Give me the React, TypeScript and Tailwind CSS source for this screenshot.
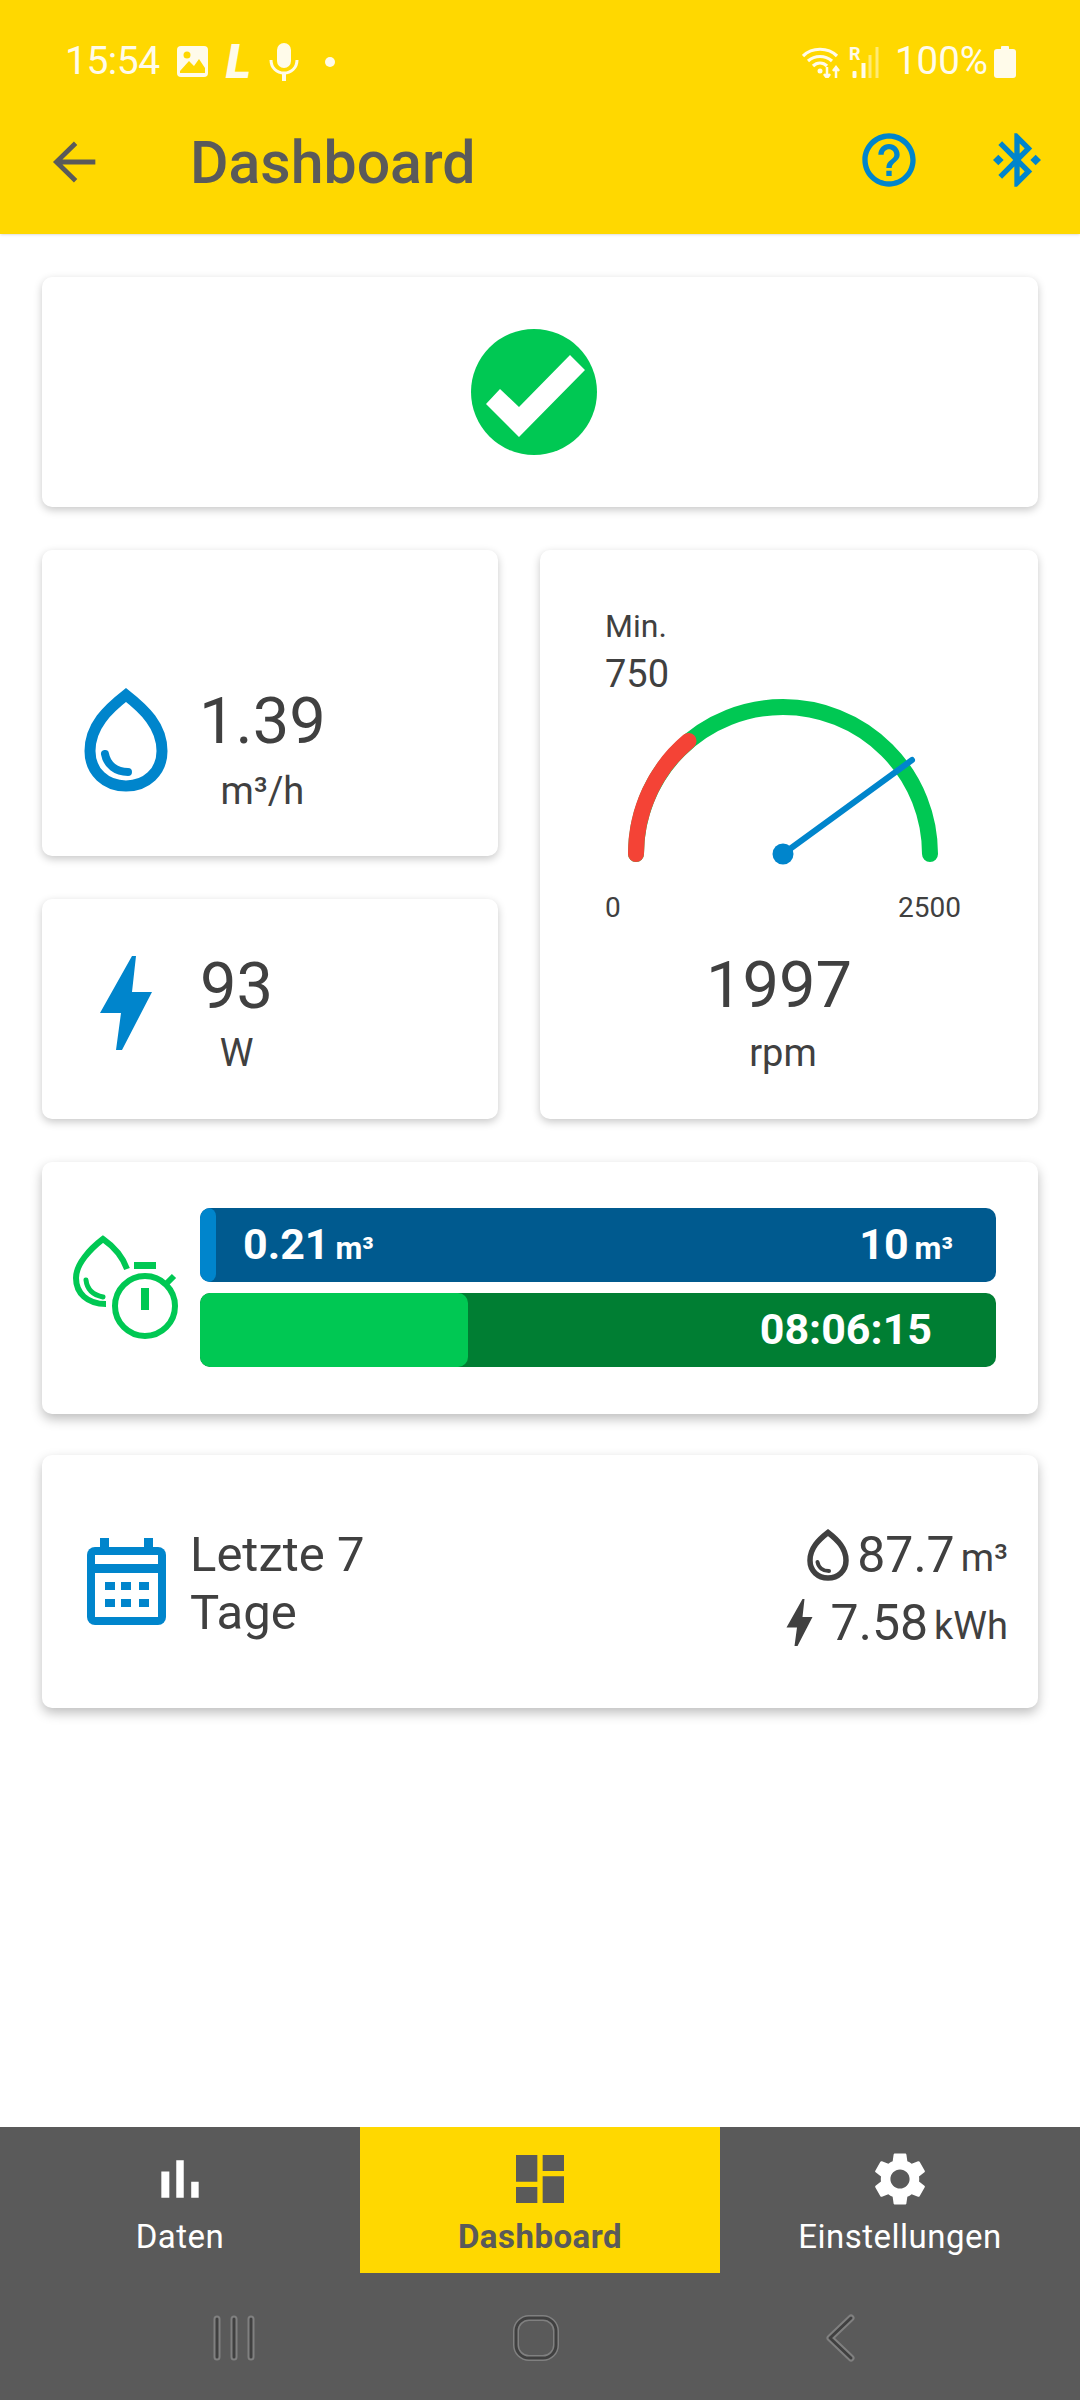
import React from 'react'

const BOLT = '32,0 36,0 32,36 52,36 22,94 16,94 21,57 0,57'

function DropIcon({ className }: { className: string }) {
  return (
    <svg viewBox="0 0 84 104" className={className} fill="none" stroke="currentColor">
      <path d="M42 7C24 21 6 38 6 63C6 84 22 98 42 98C62 98 78 84 78 63C78 38 60 21 42 7Z" strokeWidth="11" />
      <path d="M21 66C23 77 32 84 44 84" strokeWidth="8" strokeLinecap="round" />
    </svg>
  )
}

function BoltIcon({ className }: { className: string }) {
  return (
    <svg viewBox="0 0 52 94" className={className} fill="currentColor">
      <polygon points={BOLT} />
    </svg>
  )
}

function MaterialIcon({ d, className }: { d: string; className: string }) {
  return (
    <svg viewBox="0 0 24 24" className={className} fill="currentColor">
      <path d={d} />
    </svg>
  )
}

function StatusBar() {
  return (
    <div className="flex h-[120px] items-center pl-[65px] pr-[64px] pt-[3px] text-[#fffbea]">
      <span className="text-[39px] leading-none tracking-[-0.5px]">15:54</span>
      <svg viewBox="0 0 31 31" className="ml-[17px] h-[31px] w-[31px]">
        <rect width="31" height="31" rx="4" fill="currentColor" />
        <circle cx="10" cy="9" r="3.5" fill="#ffd800" />
        <path d="M3 25L12 15L17 20L22 13L28 22V27H3Z" fill="#ffd800" />
      </svg>
      <span className="ml-[18px] text-[48px] font-black italic leading-none">L</span>
      <svg viewBox="0 0 30 38" className="ml-[18px] h-[38px] w-[30px]" fill="none" stroke="currentColor">
        <rect x="8" y="0" width="14" height="25" rx="7" fill="currentColor" stroke="none" />
        <path d="M2 17C2 25 8 30 15 30C22 30 28 25 28 17" strokeWidth="3" />
        <path d="M15 30V38" strokeWidth="4" />
      </svg>
      <span className="ml-[26px] h-[10px] w-[10px] rounded-full bg-[#fffbea]" />

      <svg viewBox="0 0 40 32" className="ml-auto h-[32px] w-[40px]" fill="none" stroke="currentColor" strokeWidth="3.2">
        <path d="M1 10C10 1 26 1 35 10" />
        <path d="M6 15C13 9 23 9 30 15" />
        <path d="M11 20C15 16 21 16 25 20" />
        <circle cx="18" cy="25" r="2.5" fill="currentColor" stroke="none" />
        <path d="M25 21V32M22 28L25 32L28 28" strokeWidth="2.5" />
        <path d="M34 32V21M31 25L34 21L37 25" strokeWidth="2.5" />
      </svg>
      <div className="ml-[7px] flex h-[32px] w-[31px] flex-col">
        <span className="text-[18px] font-bold leading-[16px]">R</span>
      </div>
      <svg viewBox="0 0 30 32" className="ml-[-31px] h-[32px] w-[31px]" fill="currentColor">
        <rect x="3" y="25" width="4" height="7" rx="1" />
        <rect x="12" y="17" width="4" height="15" />
        <rect x="19" y="9" width="3" height="23" opacity=".5" />
        <rect x="26" y="1" width="3" height="31" opacity=".5" />
      </svg>
      <span className="ml-[15px] text-[38.5px] leading-none">100%</span>
      <svg viewBox="0 0 22 32" className="ml-[6px] h-[32px] w-[22px]" fill="currentColor">
        <rect x="7" y="0" width="8" height="5" rx="1" />
        <rect x="0" y="3" width="22" height="29" rx="3" />
      </svg>
    </div>
  )
}

function Header() {
  return (
    <header className="relative z-10 h-[234px] bg-[#ffd800] shadow-sm">
      <StatusBar />
      <div className="flex h-[80px] items-center">
        <svg viewBox="0 0 24 24" className="ml-[42px] mt-[3px] h-[64px] w-[64px] text-[#5a5a5a]" fill="none" stroke="currentColor" strokeWidth="1.8">
          <path d="M20 12H5.6M12.6 5L5.4 12L12.6 19" />
        </svg>
        <h1 className="ml-[84px] mt-[5px] text-[59px] font-medium leading-none text-[#5a5a5a]">Dashboard</h1>
        <MaterialIcon
          d="M11 18h2v-2h-2v2zm1-16C6.48 2 2 6.48 2 12s4.48 10 10 10 10-4.48 10-10S17.52 2 12 2zm0 18c-4.41 0-8-3.59-8-8s3.59-8 8-8 8 3.59 8 8-3.59 8-8 8zm0-14c-2.21 0-4 1.79-4 4h2c0-1.1.9-2 2-2s2 .9 2 2c0 2-3 1.75-3 5h2c0-2.25 3-2.5 3-5 0-2.21-1.79-4-4-4z"
          className="ml-auto h-[64px] w-[64px] text-[#0085cc]"
        />
        <MaterialIcon
          d="M7 12l-2-2-2 2 2 2 2-2zm10.71-4.29L12 2h-1v7.59L6.41 5 5 6.41 10.59 12 5 17.59 6.41 19 11 14.41V22h1l5.71-5.71-4.3-4.29 4.3-4.29zM13 5.83l1.88 1.88L13 9.59V5.83zm1.88 10.46L13 18.17v-3.76l1.88 1.88zM19 10l-2 2 2 2 2-2-2-2z"
          className="ml-[64px] mr-[31px] h-[64px] w-[64px] text-[#0085cc]"
        />
      </div>
    </header>
  )
}

function Card({ className, deep, children }: { className: string; deep?: boolean; children: React.ReactNode }) {
  const shadow = deep ? 'shadow-[0_5px_12px_rgba(0,0,0,0.26)]' : 'shadow-[0_3px_8px_rgba(0,0,0,0.22)]'
  return <div className={`rounded-[10px] bg-white ${shadow} ${className}`}>{children}</div>
}

function Gauge() {
  return (
    <svg viewBox="0 0 498 170" className="h-[170px] w-[498px]" fill="none">
      <path d="M96 156A147 147 0 0 1 390 156" stroke="#00c853" strokeWidth="16" strokeLinecap="round" />
      <path d="M96 156A147 147 0 0 1 148.5 43" stroke="#f44336" strokeWidth="16" strokeLinecap="round" />
      <path d="M243 156L372 62" stroke="#0085cc" strokeWidth="6" strokeLinecap="round" />
      <circle cx="243" cy="156" r="10.5" fill="#0085cc" />
    </svg>
  )
}

function TimerDropIcon() {
  return (
    <svg viewBox="0 0 106 105" className="h-[105px] w-[106px] text-[#00c853]" fill="none" stroke="currentColor">
      <path d="M54 34C49 20 40 11 30 4C17 14 3 29 3 43C3 58 14 69 33 69" strokeWidth="6" />
      <path d="M13 45C14 54 20 60 30 62" strokeWidth="5" strokeLinecap="round" />
      <circle cx="72" cy="71" r="30" strokeWidth="6" />
      <path d="M72 53V75" strokeWidth="8" />
      <path d="M61 30.5H83" strokeWidth="7" />
      <path d="M92 50L101 41" strokeWidth="6" />
    </svg>
  )
}

function CalendarIcon() {
  return (
    <svg viewBox="0 0 79 87" className="h-[87px] w-[79px] shrink-0 text-[#0085cc]" fill="currentColor">
      <rect x="13" y="0" width="9" height="14" />
      <rect x="57" y="0" width="9" height="14" />
      <rect x="0" y="9" width="79" height="78" rx="8" />
      <rect x="8" y="17" width="63" height="9" fill="#fff" />
      <rect x="8" y="35" width="63" height="44" fill="#fff" />
      <rect x="18" y="44" width="10" height="8" />
      <rect x="34" y="44" width="10" height="8" />
      <rect x="52" y="44" width="10" height="8" />
      <rect x="18" y="61" width="10" height="8" />
      <rect x="34" y="61" width="10" height="8" />
      <rect x="52" y="61" width="10" height="8" />
    </svg>
  )
}

function Cards() {
  return (
    <main className="flex flex-1 flex-col gap-[43px] px-[42px] pt-[43px] text-[#404040]">
      <Card className="flex h-[230px] items-center justify-center pr-[12px]">
        <svg viewBox="0 0 126 126" className="h-[126px] w-[126px]">
          <circle cx="63" cy="63" r="63" fill="#00c853" />
          <polygon points="15,75 29,60 48,78 99,26 114,41 48,108" fill="#fff" />
        </svg>
      </Card>

      <div className="grid grid-cols-[456px_498px] grid-rows-[306px_220px] gap-x-[42px] gap-y-[43px]">
        <Card className="flex items-end pb-[43px] pl-[42px]">
          <DropIcon className="mb-[21px] h-[104px] w-[84px] text-[#0085cc]" />
          <div className="ml-[31px] flex flex-col items-center">
            <span className="text-[65px] leading-[72px]">1.39</span>
            <span className="mt-[12px] text-[38px] leading-[44px]">m³/h</span>
          </div>
        </Card>
        <Card className="row-start-2 flex items-center pl-[58px]">
          <BoltIcon className="mb-[12px] h-[94px] w-[52px] text-[#0085cc]" />
          <div className="ml-[48px] mt-[5px] flex flex-col items-center">
            <span className="text-[65px] leading-[72px]">93</span>
            <span className="mt-[11px] text-[38px] leading-[40px]">W</span>
          </div>
        </Card>
        <Card className="col-start-2 row-span-2 row-start-1 flex flex-col">
          <span className="ml-[65px] mt-[56px] text-[32px] leading-[40px]">Min.</span>
          <span className="ml-[65px] mt-[4px] text-[38px] leading-[48px]">750</span>
          <Gauge />
          <div className="mt-[22px] flex justify-between pl-[65px] pr-[77px] text-[28px] leading-[36px]">
            <span>0</span>
            <span>2500</span>
          </div>
          <div className="mt-[23px] flex flex-col items-center pr-[12px]">
            <span className="pr-[8px] text-[65px] leading-[72px]">1997</span>
            <span className="mt-[12px] text-[38px] leading-[40px]">rpm</span>
          </div>
        </Card>
      </div>

      <Card deep className="flex h-[252px] items-center pb-[2px] pl-[31px] pr-[42px]">
        <TimerDropIcon />
        <div className="ml-[21px] flex flex-1 flex-col gap-[11px] font-bold text-white">
          <div className="relative flex h-[74px] items-center justify-between overflow-hidden rounded-[10px] bg-[#005a8f] pl-[43px] pr-[43px]">
            <div className="absolute inset-y-0 left-0 w-[16px] rounded-[10px] bg-[#0085cc]" />
            <span className="relative text-[43px] leading-none">
              0.21<span className="ml-[6px] text-[31px]">m³</span>
            </span>
            <span className="relative text-[43px] leading-none">
              10<span className="ml-[6px] text-[31px]">m³</span>
            </span>
          </div>
          <div className="relative flex h-[74px] items-center justify-end overflow-hidden rounded-[10px] bg-[#007e33] pr-[64px]">
            <div className="absolute inset-y-0 left-0 w-[268px] rounded-[10px] bg-[#00c853]" />
            <span className="relative text-[43px] leading-none">08:06:15</span>
          </div>
        </div>
      </Card>

      <Card deep className="-mt-[2px] flex h-[253px] items-center pl-[45px] pr-[30px]">
        <CalendarIcon />
        <div className="ml-[24px] mt-[4px] text-[49px] leading-[58px]">
          <div>Letzte 7</div>
          <div>Tage</div>
        </div>
        <div className="ml-auto mt-[14px] flex flex-col items-end gap-[8px]">
          <div className="flex h-[60px] items-center">
            <DropIcon className="h-[52px] w-[42px]" />
            <span className="ml-[8px] text-[50px] leading-none">87.7</span>
            <span className="ml-[6px] mt-[6px] text-[38px] leading-none">m³</span>
          </div>
          <div className="flex h-[60px] items-center">
            <BoltIcon className="h-[47px] w-[27px]" />
            <span className="ml-[18px] text-[50px] leading-none">7.58</span>
            <span className="ml-[6px] mt-[6px] text-[38px] leading-none">kWh</span>
          </div>
        </div>
      </Card>
    </main>
  )
}

function NavTab({ icon, label, active }: { icon: string; label: string; active?: boolean }) {
  return (
    <div className={`flex flex-col items-center pt-[20px] ${active ? 'bg-[#ffd800] text-[#5a5a5a]' : 'text-white'}`}>
      <MaterialIcon d={icon} className="h-[64px] w-[64px]" />
      <span className={`mt-[6px] text-[33px] leading-[40px] tracking-[0.5px] ${active ? 'font-bold' : ''}`}>{label}</span>
    </div>
  )
}

function BottomNav() {
  return (
    <footer className="bg-[#5a5a5a]">
      <div className="grid h-[146px] grid-cols-3">
        <NavTab label="Daten" icon="M5 9.2h3V19H5zM10.6 5h2.8v14h-2.8zm5.6 8H19v6h-2.8z" />
        <NavTab label="Dashboard" active icon="M3 13h8V3H3v10zm0 8h8v-6H3v6zm10 0h8V11h-8v10zm0-18v6h8V3h-8z" />
        <NavTab
          label="Einstellungen"
          icon="M19.14 12.94c.04-.3.06-.61.06-.94 0-.32-.02-.64-.07-.94l2.03-1.58c.18-.14.23-.41.12-.61l-1.92-3.32c-.12-.22-.37-.29-.59-.22l-2.39.96c-.5-.38-1.03-.7-1.62-.94l-.36-2.54c-.04-.24-.24-.41-.48-.41h-3.84c-.24 0-.43.17-.47.41l-.36 2.54c-.59.24-1.13.57-1.62.94l-2.39-.96c-.22-.08-.47 0-.59.22L2.74 8.87c-.12.21-.08.47.12.61l2.03 1.58c-.05.3-.09.63-.09.94s.02.64.07.94l-2.03 1.58c-.18.14-.23.41-.12.61l1.92 3.32c.12.22.37.29.59.22l2.39-.96c.5.38 1.03.7 1.62.94l.36 2.54c.05.24.24.41.48.41h3.84c.24 0 .44-.17.47-.41l.36-2.54c.59-.24 1.13-.56 1.62-.94l2.39.96c.22.08.47 0 .59-.22l1.92-3.32c.12-.22.07-.47-.12-.61l-2.01-1.58zM12 15.6c-1.98 0-3.6-1.62-3.6-3.6s1.62-3.6 3.6-3.6 3.6 1.62 3.6 3.6-1.62 3.6-3.6 3.6z"
        />
      </div>
      {/* android system buttons */}
      <div className="flex h-[127px] items-center pt-[2px]">
        <svg viewBox="0 0 42 46" className="ml-[213px] h-[46px] w-[42px]" fill="none" strokeLinecap="round">
          <path d="M4 4V42M21 4V42M38 4V42" stroke="#808080" strokeWidth="7" />
          <path d="M4 4V42M21 4V42M38 4V42" stroke="#404040" strokeWidth="3" />
        </svg>
        <svg viewBox="0 0 46 46" className="ml-[258px] h-[46px] w-[46px]" fill="none">
          <rect x="3" y="3" width="40" height="40" rx="13" stroke="#808080" strokeWidth="6" />
          <rect x="3" y="3" width="40" height="40" rx="13" stroke="#404040" strokeWidth="3" />
        </svg>
        <svg viewBox="0 0 30 48" className="ml-[266px] h-[48px] w-[30px]" fill="none" strokeLinecap="round" strokeLinejoin="round">
          <path d="M26 4L5 24L26 44" stroke="#808080" strokeWidth="7" />
          <path d="M26 4L5 24L26 44" stroke="#404040" strokeWidth="3" />
        </svg>
      </div>
    </footer>
  )
}

export default function App() {
  return (
    <div className="flex h-[2400px] w-[1080px] flex-col bg-white [font-family:Roboto,sans-serif]">
      <Header />
      <Cards />
      <BottomNav />
    </div>
  )
}
